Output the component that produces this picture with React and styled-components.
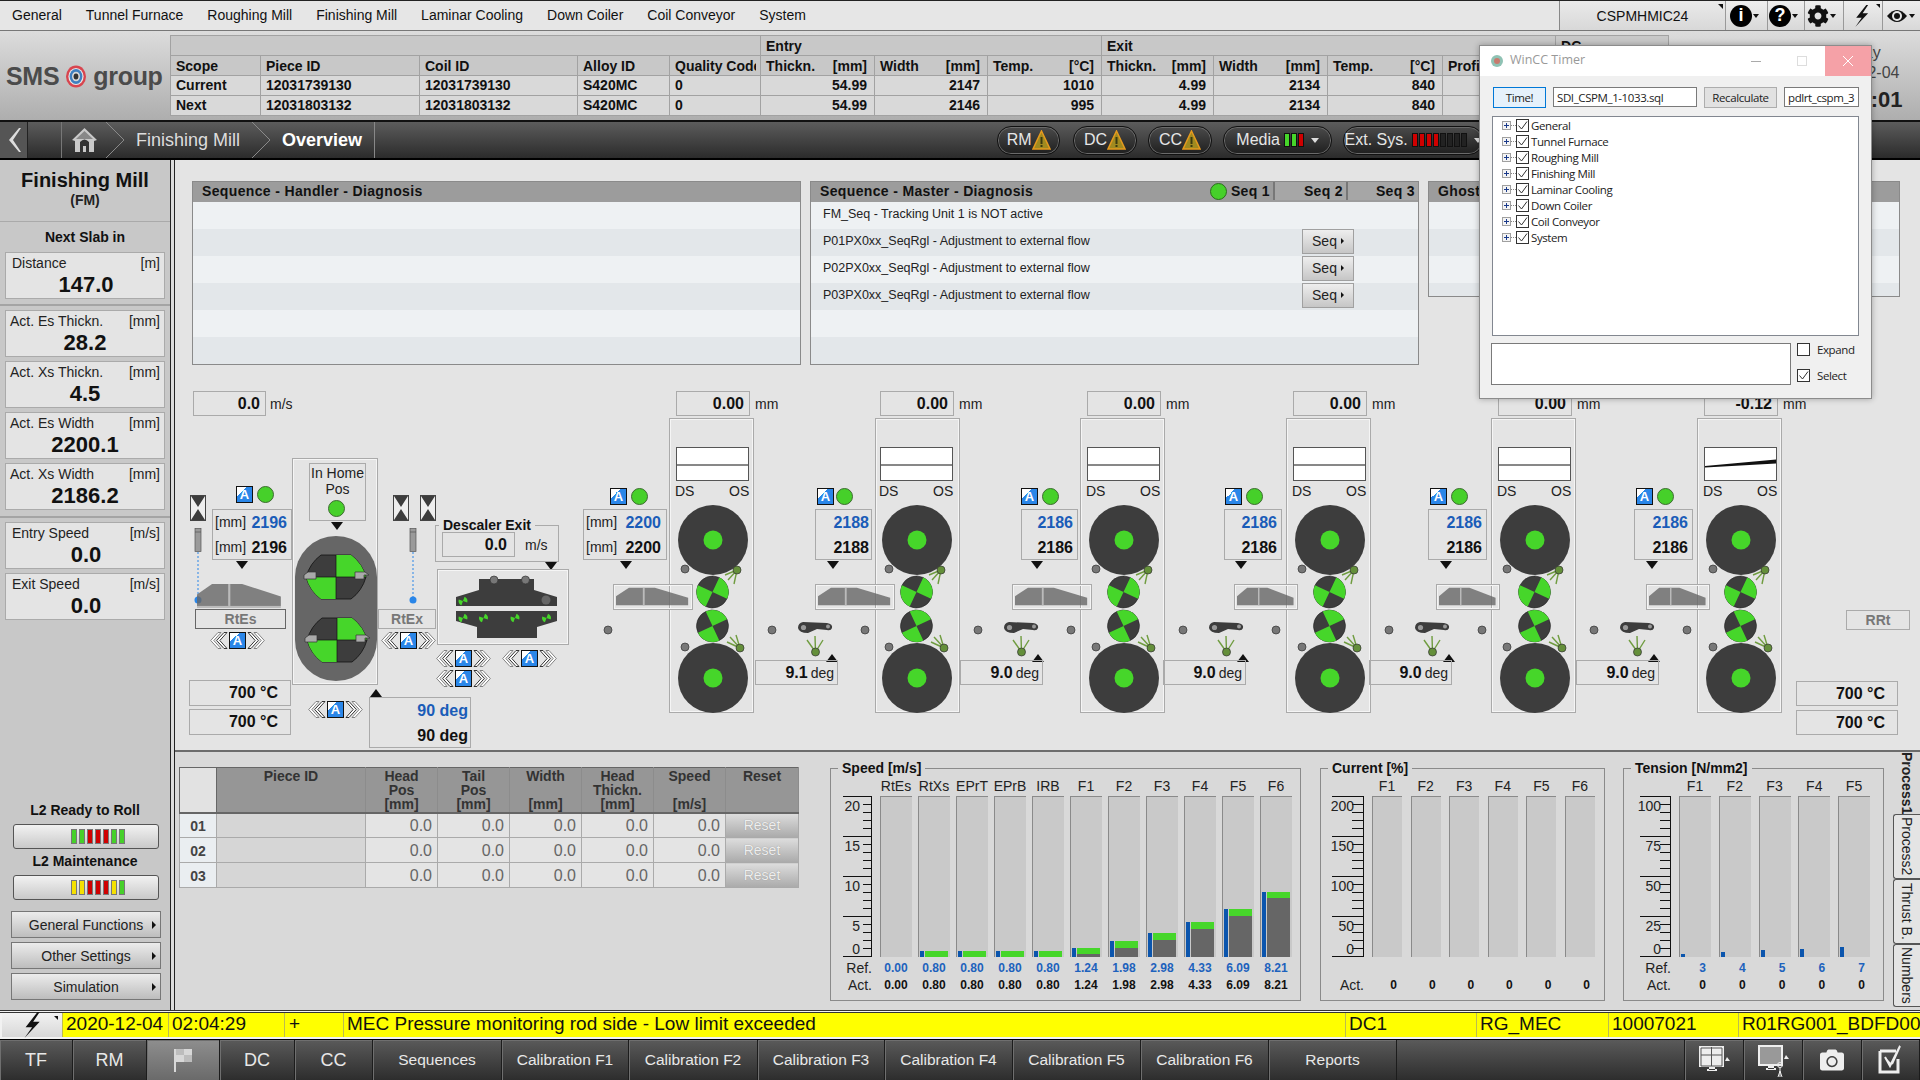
import React from 'react'
import styled, { createGlobalStyle, css } from 'styled-components'
import { FaCog, FaCamera } from 'react-icons/fa'

const GlobalStyle = createGlobalStyle`
  html, body { margin: 0; padding: 0; background: #e4e4e4; }
  * { box-sizing: border-box; }
  body { font-family: "Liberation Sans", Arial, sans-serif; color: #111; }
`

const Page = styled.div`
  position: relative;
  width: 1920px;
  height: 1080px;
  overflow: hidden;
  display: flex;
  flex-direction: column;
  font-size: 14px;
`

/* ---------- top menu ---------- */
const TopMenu = styled.div`
  height: 31px;
  display: flex;
  align-items: center;
  background: #e6e6e6;
  border-top: 1px solid #222;
  border-bottom: 1px solid #777;
`
const MenuItems = styled.div`
  flex: 1;
  display: flex;
  gap: 24px;
  padding: 0 0 2px 12px;
  font-size: 14px;
`
const HostBox = styled.div`
  position: relative;
  width: 166px;
  height: 29px;
  display: flex;
  align-items: center;
  justify-content: center;
  background: linear-gradient(#eaeaea, #d8d8d8);
  border-left: 1px solid #888;
  &::after {
    content: '';
    position: absolute;
    right: 2px;
    top: 3px;
    border-top: 5px solid #111;
    border-left: 5px solid transparent;
  }
`
const ToolBtn = styled.div`
  position: relative;
  width: ${p => p.$w}px;
  height: 29px;
  display: flex;
  align-items: center;
  gap: 1px;
  padding-left: ${p => p.$pl}px;
  border-left: 1px solid #999;
  background: linear-gradient(#eee, #d8d8d8);
`
const CornerMark = styled.span`
  position: absolute;
  right: 2px;
  top: 3px;
  border-top: 4px solid #111;
  border-left: 4px solid transparent;
`
const RoundIcon = styled.span`
  width: 22px;
  height: 22px;
  border-radius: 50%;
  background: #000;
  color: #fff;
  font-weight: bold;
  font-size: 18px;
  display: flex;
  align-items: center;
  justify-content: center;
`
const TinyArrow = styled.span`
  border-top: 4px solid #111;
  border-left: 3px solid transparent;
  border-right: 3px solid transparent;
`

/* ---------- header ---------- */
const Header = styled.div`
  height: 89px;
  display: flex;
  background: linear-gradient(#dcdcdc, #aeaeae);
`
const Logo = styled.div`
  width: 170px;
  display: flex;
  align-items: center;
  gap: 6px;
  padding: 2px 0 0 6px;
  font-size: 25px;
  font-weight: bold;
  color: #4b4b4b;
  letter-spacing: -0.3px;
`
const PlantTable = styled.table`
  margin-top: 4px;
  width: 1498px;
  height: 80px;
  table-layout: fixed;
  border-collapse: collapse;
  font-size: 14px;
  font-weight: bold;
  th, td {
    border: 1px solid #a2a2a2;
    padding: 0 7px 0 5px;
    text-align: left;
    white-space: nowrap;
    overflow: hidden;
    height: 20px;
    background: #d9d9d9;
  }
  td { padding-bottom: 1px; }
  th { background: #c8c8c8; }
`
const ClipText = styled.div`
  width: 81px;
  overflow: hidden;
`
const UnitHead = styled.div`
  display: flex;
  justify-content: space-between;
`
const NumCell = styled.td`
  && { text-align: right; }
`
const ClockBlock = styled.div`
  flex: 1;
  display: flex;
  flex-direction: column;
  align-items: center;
  padding: 12px 0 0 128px;
  font-size: 16px;
  line-height: 20px;
  color: #444;
`
const ClockTime = styled.div`
  font-size: 22px;
  font-weight: bold;
  line-height: 34px;
  color: #222;
`

/* ---------- breadcrumb ---------- */
const CrumbBar = styled.div`
  height: 40px;
  display: flex;
  align-items: center;
  background: linear-gradient(#5c5c5c, #2b2b2b);
  border-top: 2px solid #111;
  border-bottom: 2px solid #000;
  color: #e8e8e8;
`
const CrumbBack = styled.div`
  width: 28px;
  height: 100%;
  display: flex;
  align-items: center;
  justify-content: center;
  background: #555;
  border-right: 1px solid #222;
`
const CrumbSpacer = styled.div`
  width: 34px;
  height: 100%;
  border-right: 1px solid #777;
`
const CrumbHome = styled.div`
  width: 44px;
  display: flex;
  justify-content: center;
  padding-left: 1px;
`
const CrumbSep = styled.svg`
  width: 20px;
  height: 36px;
  flex: none;
`
const CrumbText = styled.div`
  font-size: 18px;
  font-weight: ${p => (p.$bold ? 'bold' : 'normal')};
  color: ${p => (p.$bold ? '#fff' : '#ddd')};
  padding: 0 ${p => p.$pad}px 0 10px;
`
const CrumbEnd = styled.div`
  width: 1px;
  height: 100%;
  background: #888;
  margin-right: 622px;
`
const Pill = styled.div`
  height: 29px;
  width: ${p => p.$w}px;
  margin-right: ${p => p.$mr}px;
  flex: none;
  display: flex;
  align-items: center;
  justify-content: center;
  gap: ${p => p.$gap ?? 4}px;
  border-radius: 14px;
  background: linear-gradient(#4a4a4a, #1f1f1f);
  border: 1px solid #111;
  box-shadow: 0 0 0 1px #6a6a6a inset;
  font-size: 16px;
  color: #e6e6e6;
`
const PillLeds = styled.div`
  display: flex;
  gap: 1px;
`
const PillLed = styled.span`
  width: 6px;
  height: 14px;
  background: ${p => p.$c};
  border: 1px solid #111;
`
const PillCaret = styled.span`
  margin-left: 3px;
  border-top: 5px solid #ddd;
  border-left: 4px solid transparent;
  border-right: 4px solid transparent;
`

/* ---------- main ---------- */
const Main = styled.div`
  height: 850px;
  display: flex;
`
const Sidebar = styled.aside`
  width: 170px;
  background: #c8c8c8;
  display: flex;
  flex-direction: column;
`
const SplitLine = styled.div`
  width: 5px;
  background: #dcdcdc;
  border-left: 1px solid #222;
  border-right: 1px solid #222;
`
const SideTitle = styled.div`
  height: 62px;
  padding-top: 9px;
  text-align: center;
  font-size: 20px;
  line-height: 22px;
  font-weight: bold;
  border-bottom: 1px solid #aaa;
  span { display: block; font-size: 14px; line-height: 18px; color: #222; }
`
const SideHeading = styled.div`
  text-align: center;
  font-weight: bold;
  font-size: 14px;
  line-height: 29px;
  padding-top: 1px;
`
const SideCard = styled.div`
  margin: 0 5px ${p => p.$mb ?? 4}px;
  height: 47px;
  background: #e4e4e4;
  border: 1px solid #aaa;
  padding: 1px 4px 0 ${p => p.$pl ?? 4}px;
`
const CardHead = styled.div`
  display: flex;
  justify-content: space-between;
  font-size: 14px;
  line-height: 18px;
  color: #222;
`
const CardValue = styled.div`
  text-align: center;
  font-size: 22px;
  font-weight: bold;
  line-height: 25px;
`
const SideRule = styled.div`
  height: 2px;
  margin: ${p => p.$mt}px 0 4px;
  background: #a4a4a4;
`
const SideFoot = styled.div`
  margin-top: auto;
  padding-bottom: 10px;
  display: flex;
  flex-direction: column;
`
const LedCaption = styled.div`
  text-align: center;
  font-weight: bold;
  font-size: 14px;
  line-height: 17px;
  margin-top: ${p => p.$mt}px;
  margin-bottom: 5px;
`
const LedButton = styled.div`
  margin: 0 11px 0 13px;
  height: 25px;
  display: flex;
  justify-content: flex-end;
  align-items: center;
  gap: 2px;
  padding-right: 33px;
  border: 1px solid #555;
  border-radius: 3px;
  background: linear-gradient(#f2f2f2, #c9c9c9);
`
const LedBar = styled.span`
  width: 6px;
  height: 15px;
  background: ${p => p.$c};
  border: 1px solid #777;
`
const SideMenuBtn = styled.div`
  position: relative;
  margin: ${p => p.$mt}px 9px 0 11px;
  height: 27px;
  display: flex;
  align-items: center;
  justify-content: center;
  border: 1px solid #777;
  background: linear-gradient(#ececec, #bdbdbd);
  color: #222;
  &::after {
    content: '';
    position: absolute;
    right: 4px;
    top: 9px;
    border-left: 4px solid #111;
    border-top: 4px solid transparent;
    border-bottom: 4px solid transparent;
  }
`

const Content = styled.div`
  width: 1745px;
  display: flex;
  flex-direction: column;
  background: #e4e4e4;
`

/* ---------- sequence panels ---------- */
const SeqArea = styled.div`
  height: 210px;
  padding: 21px 0 0 17px;
  display: flex;
  align-items: flex-start;
  gap: 9px;
`
const SeqPanel = styled.div`
  width: ${p => p.$w}px;
  height: ${p => p.$h}px;
  border: 1px solid #8a8a8a;
  overflow: hidden;
  background: #eef1f3;
`
const SeqTitle = styled.div`
  height: 20px;
  display: flex;
  align-items: center;
  padding: 0 0 2px 9px;
  background: #9c9c9c;
  font-size: 14px;
  font-weight: bold;
  letter-spacing: 0.35px;
`
const SeqName = styled.div`
  flex: 1;
`
const SeqTab = styled.div`
  width: ${p => p.$w}px;
  height: 100%;
  display: flex;
  align-items: center;
  justify-content: flex-end;
  padding-right: 3px;
  border-left: ${p => (p.$line ? '2px solid #777' : 'none')};
  background: ${p => (p.$line ? '#a6a6a6' : 'transparent')};
`
const SeqLed = styled.span`
  width: 17px;
  height: 17px;
  border-radius: 50%;
  background: #46d02a;
  border: 1px solid #2b6e1c;
  margin-right: 3px;
`
const SeqRow = styled.div`
  height: 27px;
  display: flex;
  align-items: center;
  justify-content: space-between;
  padding: 0 64px 3px 12px;
  background: ${p => (p.$alt ? '#e3e7ea' : '#eef1f3')};
  font-size: 12.5px;
  color: #222;
`
const SeqButton = styled.div`
  width: 52px;
  height: 25px;
  display: flex;
  align-items: center;
  justify-content: center;
  gap: 4px;
  font-size: 14px;
  background: linear-gradient(#eee, #c6c6c6);
  border: 1px solid #a0a0a0;
  &::after {
    content: '';
    border-left: 3px solid #111;
    border-top: 3px solid transparent;
    border-bottom: 3px solid transparent;
  }
`

/* ---------- diagram canvas ---------- */
const Canvas = styled.div`
  position: relative;
  height: 380px;
`
const at = css`
  position: absolute;
  left: ${p => p.$x - 175}px;
  top: ${p => p.$y - 370}px;
`
const ReadBox = styled.div`
  ${at}
  width: ${p => p.$w}px;
  height: ${p => p.$h ?? 25}px;
  border: 1px solid #aaa;
  display: flex;
  align-items: center;
  justify-content: flex-end;
  padding-right: ${p => p.$pr ?? 5}px;
  font-size: 16px;
  font-weight: bold;
`
const DoubleBox = styled.div`
  ${at}
  width: ${p => p.$w}px;
  height: 51px;
  border: 1px solid #aaa;
  padding-right: ${p => p.$pr ?? 4}px;
  display: flex;
  flex-direction: column;
  justify-content: center;
  font-size: 16px;
  font-weight: bold;
  line-height: 25px;
`
const DoubleRow = styled.div`
  display: flex;
  justify-content: space-between;
  padding-left: 2px;
  color: ${p => (p.$blue ? '#1a5cb8' : '#111')};
  i { font-style: normal; font-weight: normal; font-size: 14px; color: #222; }
  b { margin-left: auto; }
`
const Unit = styled.span`
  ${at}
  font-size: 14px;
  color: #222;
`
const Led = styled.span`
  ${at}
  width: 17px;
  height: 17px;
  border-radius: 50%;
  background: #46d02a;
  border: 1px solid #3d6b30;
`
const AutoIcon = styled.span`
  width: 17px;
  height: 17px;
  flex: none;
  display: flex;
  align-items: center;
  justify-content: center;
  border: 1px solid #111;
  background: linear-gradient(135deg, #fff 0 30%, #2a86e8 30%);
  color: #fff;
  font-size: 13px;
  font-weight: bold;
`
const AutoPlaced = styled(AutoIcon)`
  ${at}
`
const MoveRow = styled.div`
  ${at}
  display: flex;
  align-items: center;
  gap: 1px;
`
const TriDown = styled.span`
  ${at}
  border-top: 8px solid #111;
  border-left: 6px solid transparent;
  border-right: 6px solid transparent;
`
const TriUp = styled.span`
  ${at}
  border-bottom: 8px solid #111;
  border-left: 6px solid transparent;
  border-right: 6px solid transparent;
`
const DrawBox = styled.svg`
  ${at}
  overflow: visible;
`
const RollLabel = styled.div`
  ${at}
  width: ${p => p.$w}px;
  height: 20px;
  border: 1px solid ${p => p.$dark ? '#666' : '#aaa'};
  display: flex;
  align-items: center;
  justify-content: center;
  font-weight: bold;
  font-size: 14px;
  color: #777;
`
const FrameBox = styled.div`
  ${at}
  width: ${p => p.$w}px;
  height: ${p => p.$h}px;
  border: 1px solid #aaa;
  box-shadow: inset 0 0 0 1px #f5f5f5;
`
const HomeBox = styled.div`
  ${at}
  width: 57px;
  height: 58px;
  border: 1px solid #aaa;
  text-align: center;
  font-size: 14px;
  line-height: 16px;
  padding-top: 1px;
  color: #222;
`
const GroupBox = styled.div`
  ${at}
  width: 124px;
  height: 37px;
  border: 1px solid #aaa;
`
const GroupTitle = styled.span`
  ${at}
  padding: 0 4px;
  background: #e4e4e4;
  font-weight: bold;
  font-size: 14px;
`
const AngleBox = styled(ReadBox)`
  font-size: 16px;
  padding-right: 3px;
  gap: 3px;
  span { font-weight: normal; font-size: 14px; color: #222; }
`
const StandLabel = styled.span`
  ${at}
  font-size: 14px;
  color: #222;
`
const PieceFrame = styled.div`
  ${at}
  width: ${p => p.$w}px;
  height: 26px;
  border: 1px solid #aaa;
  box-shadow: inset 0 0 0 1px #f4f4f4;
  padding: 2px;
`

/* ---------- lower panel ---------- */
const Lower = styled.div`
  height: 260px;
  display: flex;
  align-items: flex-start;
  background: #d9d9d9;
  border-top: 2px solid #6c6c6c;
  padding-left: 4px;
`
const SlabTable = styled.table`
  width: 619px;
  margin-top: 15px;
  table-layout: fixed;
  border-collapse: collapse;
  border: 1px solid #666;
  th {
    height: 45px;
    background: #969696;
    color: #333;
    font-size: 14px;
    line-height: 14px;
    vertical-align: top;
    padding: 1px 0 0;
    border-right: 1px solid #8c8c8c;
    border-bottom: 2px solid #666;
  }
  th:first-child { background: #e2e2e2; border-right: 1px solid #666; }
  td {
    height: 25px;
    background: #e4e4e4;
    border: 1px solid #aaa;
    text-align: right;
    padding: 1px 5px 0 0;
    font-size: 16px;
    line-height: 18px;
    color: #666;
  }
`
const RowNo = styled.td`
  && { background: #eaeef1; text-align: center; padding: 1px 0 0; font-weight: bold; font-size: 14px; color: #444; }
`
const EmptyId = styled.td`
  && { background: #d6d6d6; }
`
const ResetCell = styled.td`
  && { padding: 0; background: #d0d0d0; }
`
const ResetBtn = styled.div`
  height: 23px;
  display: flex;
  align-items: center;
  justify-content: center;
  background: linear-gradient(#dcdcdc, #ababab);
  color: #eee;
  font-size: 14px;
  text-shadow: 0 0 1px #888;
`
const ChartField = styled.fieldset`
  margin: 8px 0 0 ${p => p.$ml}px;
  padding: 0;
  width: ${p => p.$w}px;
  height: 241px;
  border: 1px solid #8a8a8a;
  min-width: 0;
`
const ChartLegend = styled.legend`
  margin-left: 7px;
  padding: 0 4px;
  font-size: 14px;
  font-weight: bold;
  line-height: 16px;
`
const ColsLine = styled.div`
  display: flex;
  justify-content: space-between;
  margin-left: ${p => p.$left}px;
  width: ${p => p.$w}px;
`
const ColName = styled.div`
  width: ${p => p.$cw}px;
  height: 20px;
  text-align: center;
  white-space: nowrap;
  font-size: 14px;
  line-height: 20px;
  color: #222;
  display: flex;
  justify-content: center;
`
const PlotRow = styled.div`
  display: flex;
  height: 161px;
`
const AxisSvg = styled.svg`
  flex: none;
  overflow: visible;
`
const BarCol = styled.div`
  width: ${p => p.$cw}px;
  height: 161px;
  background: #c9c9c9;
  border-top: 1px solid #8a8a8a;
  border-left: 1px solid #8a8a8a;
  display: flex;
  align-items: flex-end;
  padding-left: 1px;
  gap: 1px;
`
const RefBar = styled.div`
  width: 4px;
  height: ${p => p.$h}px;
  background: #0b55ad;
`
const GreenBar = styled.div`
  width: 23px;
  height: ${p => p.$h}px;
  background: #46d62a;
  display: flex;
  align-items: flex-end;
`
const GrayFill = styled.div`
  width: 100%;
  height: ${p => p.$h}px;
  background: #666;
`
const NumRow = styled.div`
  display: flex;
  height: ${p => p.$h}px;
  align-items: center;
  padding-top: ${p => p.$pt ?? 0}px;
`
const NumLabel = styled.div`
  flex: none;
  width: ${p => p.$w}px;
  text-align: right;
  padding-right: 8px;
  font-size: 14px;
  color: #222;
`
const NumVal = styled.div`
  width: ${p => p.$cw}px;
  text-align: ${p => p.$align};
  padding-right: ${p => (p.$align === 'right' ? 5 : 0)}px;
  font-size: 12px;
  font-weight: bold;
  color: ${p => (p.$blue ? '#1d62bd' : '#111')};
`
const NumVals = styled.div`
  display: flex;
  justify-content: space-between;
  width: ${p => p.$w}px;
`
const SideTabs = styled.div`
  margin-left: 9px;
  width: 27px;
  display: flex;
  flex-direction: column;
`
const SideTab = styled.div`
  width: 27px;
  height: ${p => p.$h}px;
  writing-mode: vertical-rl;
  display: flex;
  align-items: center;
  justify-content: center;
  font-size: 14px;
  font-weight: ${p => (p.$on ? 'bold' : 'normal')};
  color: #222;
  border: ${p => (p.$on ? 'none' : '1px solid #555')};
  border-right: none;
  border-radius: 3px 0 0 3px;
  background: ${p => (p.$on ? 'transparent' : '#e4e4e4')};
`

/* ---------- alarm + nav ---------- */
const AlarmBar = styled.div`
  height: 30px;
  display: flex;
  background: #f2f2f2;
  border-top: 3px double #333;
  border-bottom: 1px solid #000;
  padding: 0 0 2px 2px;
`
const AlarmBolt = styled.div`
  position: relative;
  width: 60px;
  display: flex;
  align-items: center;
  justify-content: center;
  background: linear-gradient(#f2f2f2, #d8d8d8);
  &::after {
    content: '';
    position: absolute;
    right: 4px;
    top: 3px;
    border-top: 4px solid #111;
    border-left: 4px solid transparent;
  }
`
const AlarmCell = styled.div`
  width: ${p => p.$w}px;
  flex: none;
  background: #ffff00;
  border-left: 1px solid #bcbc50;
  padding-left: ${p => p.$pl ?? 3}px;
  font-size: 19px;
  line-height: 22px;
  white-space: nowrap;
  overflow: hidden;
`
const BottomNav = styled.div`
  height: 40px;
  display: flex;
  background: linear-gradient(#5a5a5a, #2d2d2d);
`
const NavBtn = styled.div`
  width: ${p => p.$w}px;
  flex: none;
  display: flex;
  align-items: center;
  justify-content: center;
  font-size: ${p => p.$fs ?? 15.5}px;
  color: #e8e8e8;
  border-right: 1px solid #1c1c1c;
  background: ${p => (p.$on ? 'linear-gradient(#8e8e8e, #6a6a6a)' : 'transparent')};
  box-shadow: inset 1px 1px 0 #6f6f6f;
`
const NavFill = styled.div`
  flex: 1;
  border-right: 1px solid #1c1c1c;
`

/* ---------- floating window ---------- */
const Win = styled.div`
  position: absolute;
  left: 1479px;
  top: 45px;
  width: 393px;
  height: 354px;
  background: #f0f0f0;
  border: 1px solid #8c8c8c;
  box-shadow: 0 0 6px rgba(0,0,0,.3);
  font-family: "Open Sans", sans-serif;
  font-size: 11.5px;
  letter-spacing: -0.4px;
  z-index: 10;
`
const WinTitle = styled.div`
  height: 30px;
  display: flex;
  align-items: center;
  background: #fff;
  padding-left: 10px;
  color: #999;
  font-size: 12.5px;
  letter-spacing: 0;
`
const WinName = styled.div`
  flex: 1;
  padding: 0 0 3px 6px;
`
const WinCtl = styled.div`
  width: 46px;
  height: 100%;
  display: flex;
  align-items: center;
  justify-content: center;
  background: ${p => (p.$close ? '#f5a1a7' : 'transparent')};
  color: #fff;
`
const WinMinGlyph = styled.span`
  width: 10px;
  height: 1px;
  background: #aaa;
`
const WinMaxGlyph = styled.span`
  width: 10px;
  height: 10px;
  border: 1px solid #ddd;
`
const WinRow = styled.div`
  display: flex;
  align-items: flex-start;
  gap: 7px;
  padding: 11px 12px 0 13px;
`
const WinButton = styled.div`
  width: ${p => p.$w}px;
  height: 21px;
  display: flex;
  align-items: center;
  justify-content: center;
  border: 1px solid ${p => (p.$on ? '#0078d7' : '#adadad')};
  background: ${p => (p.$on ? '#e5f1fb' : '#e1e1e1')};
  color: #222;
`
const WinInput = styled.div`
  width: ${p => p.$w}px;
  height: 20px;
  padding-left: 3px;
  display: flex;
  align-items: center;
  background: #fff;
  border: 1px solid #7a7a7a;
  color: #222;
`
const Tree = styled.div`
  margin: 8px 12px 0;
  height: 220px;
  background: #fff;
  border: 1px solid #828790;
  padding: 0 0 0 9px;
`
const TreeRow = styled.div`
  height: 16px;
  display: flex;
  align-items: center;
  color: #222;
`
const TreeExp = styled.span`
  position: relative;
  width: 9px;
  height: 9px;
  flex: none;
  border: 1px solid #a0a0a0;
  background: #f4f4f4;
  &::before {
    content: '';
    position: absolute;
    left: 1px;
    top: 3px;
    width: 5px;
    height: 1px;
    background: #1a3a8a;
  }
  &::after {
    content: '';
    position: absolute;
    left: 3px;
    top: 1px;
    width: 1px;
    height: 5px;
    background: #1a3a8a;
  }
`
const TreeDots = styled.span`
  width: 5px;
  border-top: 1px dotted #888;
  flex: none;
`
const CheckBox = styled.span`
  width: 13px;
  height: 13px;
  flex: none;
  margin-right: 2px;
  border: 1px solid #333;
  background: #fff;
  display: flex;
  align-items: center;
  justify-content: center;
`
const WinFoot = styled.div`
  display: flex;
  gap: 6px;
  margin: 7px 0 0 11px;
`
const WinMemo = styled.div`
  width: 300px;
  height: 42px;
  background: #fff;
  border: 1px solid #7a7a7a;
`
const WinChecks = styled.div`
  display: flex;
  flex-direction: column;
  gap: 13px;
`
const WinCheckRow = styled.div`
  display: flex;
  align-items: center;
  height: 13px;
  gap: 5px;
  color: #222;
`

/* ---------- drawings ---------- */
const LogoMark = () => (
  <svg width="22" height="23" viewBox="0 0 22 23">
    <ellipse cx="11" cy="11.5" rx="10" ry="11" fill="#d8454f" />
    <ellipse cx="11" cy="11.5" rx="7.6" ry="8.6" fill="#e9e9e9" />
    <ellipse cx="11" cy="11.5" rx="6.4" ry="7.4" fill="#3f7fc0" />
    <ellipse cx="11" cy="11.5" rx="4" ry="4.8" fill="#d8d8d8" />
    <ellipse cx="11" cy="11.5" rx="2.4" ry="3" fill="#333" />
  </svg>
)
const HomeIcon = () => (
  <svg width="25" height="25" viewBox="0 0 25 25">
    <path d="M12.5 0 L25 12 L22 13 L22 24 L3 24 L3 13 L0 12 Z" fill="#c9c9c9" />
    <path d="M12.5 3 L4 11 L21 11Z" fill="#888" />
    <path d="M8 24 V14 Q12.5 9 17 14 V24 H14 V18 H11 V24Z" fill="#333" />
  </svg>
)
const BoltIcon = ({ size = 24, color = '#111' }) => (
  <svg width={size * 0.7} height={size} viewBox="0 0 16 24">
    <path d="M13 0 L2 14 H8 L1 24 L15 9 H9 L15 0Z" fill={color} />
  </svg>
)
const EyeIcon = () => (
  <svg width="22" height="16" viewBox="0 0 22 16">
    <path d="M1 8 Q11 -4 21 8 Q11 20 1 8Z" fill="#111" />
    <circle cx="11" cy="8" r="5" fill="#e6e6e6" />
    <circle cx="11" cy="8" r="3" fill="#111" />
  </svg>
)
const WarnTri = () => (
  <svg width="19" height="20" viewBox="0 0 19 20">
    <path d="M9.5 1 L18 19 H1Z" fill="#a08a20" stroke="#e59a1e" strokeWidth="1.5" />
    <rect x="8.5" y="7" width="2" height="7" fill="#3a3a10" />
    <rect x="8.5" y="15" width="2" height="2" fill="#3a3a10" />
  </svg>
)
const Hourglass = ({ x, y }) => (
  <DrawBox $x={x} $y={y} width="16" height="26" viewBox="0 0 16 26">
    <rect x=".5" y=".5" width="15" height="25" fill="#eee" stroke="#444" />
    <path d="M1 1 H15 L8 12Z M1 25 H15 L8 14Z" fill="#3c3c3c" />
  </DrawBox>
)
const Sensor = ({ x }) => (
  <DrawBox $x={x} $y={528} width="9" height="77" viewBox="0 0 9 77">
    <rect x="1" y=".5" width="6" height="23" fill="#9a9a9a" stroke="#555" strokeWidth=".7" />
    <line x1="1" x2="7" y1="4" y2="4" stroke="#555" strokeWidth=".7" />
    <line x1="4" x2="4" y1="24" y2="70" stroke="#2a86e8" strokeDasharray="2 2" />
    <circle cx="4" cy="72" r="3.5" fill="#2a86e8" />
  </DrawBox>
)
const Chev = ({ right }) => (
  <svg width="18" height="17" viewBox="0 0 18 17">
    <g transform={right ? 'translate(18 0) scale(-1 1)' : undefined} fill="#fff" strokeWidth=".9">
      <path d="M8 .5 L.7 8.5 L8 16.5 H11 L3.8 8.5 L11 .5Z" stroke="#777" />
      <path d="M14 .5 L6.7 8.5 L14 16.5 H17 L9.8 8.5 L17 .5Z" stroke="#222" />
    </g>
  </svg>
)
const MoveCtl = ({ x, y }) => (
  <MoveRow $x={x} $y={y}>
    <Chev />
    <AutoIcon>A</AutoIcon>
    <Chev right />
  </MoveRow>
)
const PieceShape = ({ x, y, w, h }) => (
  <DrawBox $x={x} $y={y} width={w} height={h} viewBox="0 0 80 24" preserveAspectRatio="none">
    <path d="M0 11 L14 1 H42 L78 13 V22 H0Z" fill="#666" fillOpacity=".8" />
    <rect x="29" y="1" width="2" height="21" fill="#bbb" />
    <rect x="0" y="22" width="78" height="2" fill="#bbb" />
  </DrawBox>
)
const Pinwheel = ({ cx, cy, r, rot = 0, border = '#222' }) => (
  <g transform={`translate(${cx} ${cy}) rotate(${rot})`}>
    <circle r={r} fill="#3d3d3d" stroke={border} strokeWidth=".5" />
    <path d={`M0 0 V${-r} A${r} ${r} 0 0 1 ${r} 0Z M0 0 V${r} A${r} ${r} 0 0 1 ${-r} 0Z`} fill="#46d62a" />
  </g>
)
const Spray = ({ cx, cy, ends }) => (
  <g>
    {ends.map(([ex, ey], k) => (
      <line key={k} x1={cx} y1={cy} x2={ex} y2={ey} stroke="#6f9c3f" strokeWidth="1.4" />
    ))}
    <circle cx={cx} cy={cy} r="4" fill="#648f3a" stroke="#333" strokeWidth=".7" />
  </g>
)
const GrayDot = ({ cx, cy }) => <circle cx={cx} cy={cy} r="4" fill="#777" stroke="#333" strokeWidth=".7" />

const CoilerShape = () => {
  const roll = 'M-15 -22 H15 Q26 -14 30 0 Q26 14 15 22 H-15 Q-26 14 -30 0 Q-26 -14 -15 -22Z'
  const single = (cx, cy) => (
    <g transform={`translate(${cx} ${cy})`}>
      <path d={roll} fill="#3d3d3d" stroke="#111" strokeWidth=".8" />
      <path d="M0 0 V-22 H15 Q26 -14 30 0Z M0 0 V22 H-15 Q-26 14 -30 0Z" fill="#46d62a" />
      <line x1="0" x2="0" y1="-22" y2="22" stroke="#111" strokeWidth=".7" />
      <line x1="-30" x2="30" y1="0" y2="0" stroke="#111" strokeWidth=".7" />
      <path d="M-32 -2 L-28 -5 H-20 V2 H-32Z M19 -5 H29 L33 -2 H28 V2 H19Z" fill="#aaa" stroke="#333" strokeWidth=".7" />
    </g>
  )
  return (
    <DrawBox $x={295} $y={536} width="82" height="145" viewBox="0 0 82 145">
      <rect width="82" height="145" rx="41" fill="#666" />
      {single(41, 41)}
      {single(42, 104)}
    </DrawBox>
  )
}

const DescalerShape = () => (
  <DrawBox $x={437} $y={569} width="132" height="76" viewBox="0 0 132 76">
    <path d="M42 10 H97 V21 L120 28 V37 H19 V28 L42 21Z" fill="#3d3d3d" />
    <path d="M19 42 H120 V52 L100 58 V69 H40 V58 L19 52Z" fill="#3d3d3d" />
    <GrayDot cx="57" cy="11" />
    <GrayDot cx="88.5" cy="11" />
    <circle cx="109" cy="31" r="4.5" fill="#666" />
    {[[26, 32], [26, 49], [46.5, 49], [78, 49], [109.5, 49]].map(([cx, cy], k) => (
      <Pinwheel key={k} cx={cx} cy={cy} r="4.5" rot="20" border="#3d3d3d" />
    ))}
  </DrawBox>
)

const StandDrawing = ({ x }) => (
  <DrawBox $x={x} $y={418} width="85" height="295" viewBox="0 0 85 295">
    <circle cx="44" cy="122" r="35" fill="#3d3d3d" />
    <circle cx="44" cy="122" r="9.5" fill="#46d62a" />
    <circle cx="44" cy="260" r="35" fill="#3d3d3d" />
    <circle cx="44" cy="260" r="9.5" fill="#46d62a" />
    <Pinwheel cx="43.5" cy="174" r="16" rot="25" />
    <Pinwheel cx="43.5" cy="208" r="16" rot="-25" />
    <GrayDot cx="16" cy="151" />
    <GrayDot cx="16" cy="229" />
    <Spray cx="68" cy="152" ends={[[56, 157], [59, 162], [65, 166]]} />
    <Spray cx="71" cy="230" ends={[[58, 224], [61, 219], [67, 217]]} />
  </DrawBox>
)
const Gauge = ({ x, tilt }) => (
  <DrawBox $x={x} $y={447} width="73" height="34" viewBox="0 0 73 34">
    <rect x=".5" y=".5" width="72" height="33" fill="#fff" stroke="#555" />
    {tilt
      ? <path d="M1 19 L72 12.5 V16.5 L1 20.5Z" fill="#111" />
      : <line x1="1" x2="72" y1="18" y2="18" stroke="#111" />}
  </DrawBox>
)
const Looper = ({ x }) => (
  <DrawBox $x={x} $y={620} width="40" height="38" viewBox="0 0 40 38">
    <path d="M6 2 L30 3 Q36 4 35 8 Q34 11 30 10 L20 9 L11 13 Q2 13 1 8 Q1 3 6 2Z" fill="#3d3d3d" />
    <circle cx="6.5" cy="7.5" r="2.6" fill="#999" />
    <circle cx="31" cy="6.5" r="2" fill="#999" />
    <Spray cx="18.5" cy="32" ends={[[10, 20], [18, 16], [26, 20]]} />
  </DrawBox>
)
const MillDots = ({ x }) => (
  <DrawBox $x={x} $y={620} width="8" height="20" viewBox="0 0 8 20">
    <GrayDot cx="4" cy="10" />
  </DrawBox>
)

/* ---------- data ---------- */
const menus = ['General', 'Tunnel Furnace', 'Roughing Mill', 'Finishing Mill', 'Laminar Cooling', 'Down Coiler', 'Coil Conveyor', 'System']
const colWidths = [90, 159, 158, 92, 91, 114, 113, 114, 112, 114, 115, 113, 113]
const stands = [
  { x: 669, d: 0, ax: 0, pr: 5, top: '0.00', w: 2200, bL: 583, bR: 667, pX: 613, pW: 80, ang: '9.1', aX: 755 },
  { x: 875, d: -2, ax: 2, pr: 2, top: '0.00', w: 2188, bL: 815, bR: 872, pX: 815, pW: 80, ang: '9.0', aX: 960 },
  { x: 1080, d: 0, ax: 0, pr: 4, top: '0.00', w: 2186, bL: 1021, bR: 1078, pX: 1012, pW: 80, ang: '9.0', aX: 1163 },
  { x: 1286, d: 0, ax: 0, pr: 4, top: '0.00', w: 2186, bL: 1224, bR: 1282, pX: 1234, pW: 64, ang: '9.0', aX: 1369 },
  { x: 1491, d: 0, ax: 0, pr: 4, top: '0.00', w: 2186, bL: 1428, bR: 1487, pX: 1436, pW: 64, ang: '9.0', aX: 1576 },
  { x: 1697, d: 0, ax: 0, pr: 4, top: '-0.12', w: 2186, bL: 1634, bR: 1693, pX: 1646, pW: 64, tilt: true },
]
const speedCols = [
  { n: 'RtEs', r: '0.00', a: '0.00', b: 0, g: 0, d: 0 },
  { n: 'RtXs', r: '0.80', a: '0.80', b: 6, g: 6, d: 0 },
  { n: 'EPrT', r: '0.80', a: '0.80', b: 6, g: 6, d: 0 },
  { n: 'EPrB', r: '0.80', a: '0.80', b: 6, g: 6, d: 0 },
  { n: 'IRB', r: '0.80', a: '0.80', b: 6, g: 6, d: 0 },
  { n: 'F1', r: '1.24', a: '1.24', b: 9, g: 9, d: 3 },
  { n: 'F2', r: '1.98', a: '1.98', b: 16, g: 16, d: 9 },
  { n: 'F3', r: '2.98', a: '2.98', b: 24, g: 24, d: 17 },
  { n: 'F4', r: '4.33', a: '4.33', b: 35, g: 35, d: 28 },
  { n: 'F5', r: '6.09', a: '6.09', b: 48, g: 48, d: 41 },
  { n: 'F6', r: '8.21', a: '8.21', b: 65, g: 65, d: 59 },
]
const currentCols = ['F1', 'F2', 'F3', 'F4', 'F5', 'F6'].map(n => ({ n, a: '0', b: 0, g: 0, d: 0 }))
const tensionCols = [3, 4, 5, 6, 7].map((r, k) => ({ n: `F${k + 1}`, r: String(r), a: '0', b: [3, 5, 7, 8, 10][k], g: 0, d: 0 }))

const Axis = ({ width, labels, major, minor, labelX }) => {
  const ticks = []
  for (let k = 0; k <= 20; k++) ticks.push(k)
  return (
    <AxisSvg width={width} height="161" viewBox={`0 0 ${width} 161`}>
      {ticks.map(k => {
        const y = k * 8 + 0.5
        return <line key={k} x1={k % 5 === 0 ? major : minor} x2={width - 8} y1={y} y2={y} stroke="#111" />
      })}
      <line x1={width - 8.5} x2={width - 8.5} y1="0" y2="161" stroke="#111" />
      {labels.map((l, k) => (
        <text key={l} x={labelX} y={k === labels.length - 1 ? 158 : 15 + k * 40} textAnchor="end" fontSize="14" fill="#222" fontFamily="Liberation Sans">{l}</text>
      ))}
    </AxisSvg>
  )
}

const Chart = ({ title, ml, w, offset, span, cw, cols, labels, major, minor, labelX, align, rowPad }) => (
  <ChartField $ml={ml} $w={w}>
    <ChartLegend>{title}</ChartLegend>
    <ColsLine $left={offset} $w={span}>
      {cols.map(c => <ColName key={c.n} $cw={cw}>{c.n}</ColName>)}
    </ColsLine>
    <PlotRow>
      <Axis width={offset} labels={labels} major={major} minor={minor} labelX={labelX} />
      <ColsLine $left={0} $w={span}>
        {cols.map(c => (
          <BarCol key={c.n} $cw={cw}>
            {c.b > 0 && <RefBar $h={c.b} />}
            {c.g > 0 && <GreenBar $h={c.g}><GrayFill $h={c.d} /></GreenBar>}
          </BarCol>
        ))}
      </ColsLine>
    </PlotRow>
    <NumRow $h={rowPad} $pt={2}>
      {cols[0].r && <NumLabel $w={offset}>Ref.</NumLabel>}
      {cols[0].r && (
        <NumVals $w={span}>
          {cols.map(c => <NumVal key={c.n} $cw={cw} $align={align} $blue>{c.r}</NumVal>)}
        </NumVals>
      )}
    </NumRow>
    <NumRow $h={15}>
      <NumLabel $w={offset}>Act.</NumLabel>
      <NumVals $w={span}>
        {cols.map(c => <NumVal key={c.n} $cw={cw} $align={align}>{c.a}</NumVal>)}
      </NumVals>
    </NumRow>
  </ChartField>
)

const Stand = ({ s }) => (
  <>
    <ReadBox $x={s.x + 7 + s.d} $y={391} $w={74}>{s.top}</ReadBox>
    <Unit $x={s.x + 86 + s.d} $y={396}>mm</Unit>
    <FrameBox $x={s.x} $y={418} $w={85} $h={295} />
    <Gauge x={s.x + 7 + s.d} tilt={s.tilt} />
    <StandLabel $x={s.x + 6 + s.d} $y={483}>DS</StandLabel>
    <StandLabel $x={s.x + 60 + s.d} $y={483}>OS</StandLabel>
    <StandDrawing x={s.x + s.d} />
    <AutoPlaced $x={s.bR - 57 + s.ax} $y={488}>A</AutoPlaced>
    <Led $x={s.bR - 36} $y={488} />
    <DoubleBox $x={s.bL} $y={509} $w={s.bR - s.bL} $pr={s.pr}>
      <DoubleRow $blue>{s.x === 669 && <i>[mm]</i>}<b>{s.w}</b></DoubleRow>
      <DoubleRow>{s.x === 669 && <i>[mm]</i>}<b>{s.w}</b></DoubleRow>
    </DoubleBox>
    <TriDown $x={s.bR - 47 + s.ax} $y={561} />
    <PieceFrame $x={s.pX} $y={584} $w={s.pW}>
      <svg width={s.pW - 6} height="20" viewBox="0 0 80 24" preserveAspectRatio="none">
        <path d="M0 11 L14 1 H42 L78 13 V22 H0Z" fill="#666" fillOpacity=".8" />
        <rect x="29" y="1" width="2" height="21" fill="#bbb" />
      </svg>
    </PieceFrame>
    {s.ang && (
      <>
        <MillDots x={s.x + 99} />
        <MillDots x={s.x + 192} />
        <Looper x={s.x + 128} />
        <TriUp $x={s.x + 157} $y={654} />
        <AngleBox $x={s.aX} $y={660} $w={83}>{s.ang}<span>deg</span></AngleBox>
      </>
    )}
  </>
)

const Check = () => (
  <svg width="11" height="11" viewBox="0 0 11 11">
    <path d="M1.5 5.5 L4.5 9 L10 1.5" fill="none" stroke="#333" strokeWidth="1" />
  </svg>
)

const App = () => (
  <Page>
    <GlobalStyle />
    <TopMenu>
      <MenuItems>{menus.map(m => <span key={m}>{m}</span>)}</MenuItems>
      <HostBox>CSPMHMIC24</HostBox>
      <ToolBtn $w={42} $pl={4}><RoundIcon>i</RoundIcon><TinyArrow /></ToolBtn>
      <ToolBtn $w={37} $pl={1}><RoundIcon>?</RoundIcon><TinyArrow /></ToolBtn>
      <ToolBtn $w={39} $pl={2}><FaCog size={22} color="#111" /><TinyArrow /></ToolBtn>
      <ToolBtn $w={39} $pl={10}><BoltIcon size={22} /><CornerMark /></ToolBtn>
      <ToolBtn $w={38} $pl={3}><EyeIcon /><TinyArrow /></ToolBtn>
    </TopMenu>

    <Header>
      <Logo>SMS<LogoMark />group</Logo>
      <PlantTable>
        <colgroup>{colWidths.map((w, k) => <col key={k} width={w} />)}</colgroup>
        <thead>
          <tr>
            <th colSpan={5} />
            <th colSpan={3}>Entry</th>
            <th colSpan={4}>Exit</th>
            <th>DC</th>
          </tr>
          <tr>
            <th>Scope</th>
            <th>Piece ID</th>
            <th>Coil ID</th>
            <th>Alloy ID</th>
            <th><ClipText>Quality Code</ClipText></th>
            <th><UnitHead>Thickn.<span>[mm]</span></UnitHead></th>
            <th><UnitHead>Width<span>[mm]</span></UnitHead></th>
            <th><UnitHead>Temp.<span>[°C]</span></UnitHead></th>
            <th><UnitHead>Thickn.<span>[mm]</span></UnitHead></th>
            <th><UnitHead>Width<span>[mm]</span></UnitHead></th>
            <th><UnitHead>Temp.<span>[°C]</span></UnitHead></th>
            <th>Profile</th>
            <th />
          </tr>
        </thead>
        <tbody>
          <tr>
            <td>Current</td><td>12031739130</td><td>12031739130</td><td>S420MC</td><td>0</td>
            <NumCell>54.99</NumCell><NumCell>2147</NumCell><NumCell>1010</NumCell>
            <NumCell>4.99</NumCell><NumCell>2134</NumCell><NumCell>840</NumCell><td /><td />
          </tr>
          <tr>
            <td>Next</td><td>12031803132</td><td>12031803132</td><td>S420MC</td><td>0</td>
            <NumCell>54.99</NumCell><NumCell>2146</NumCell><NumCell>995</NumCell>
            <NumCell>4.99</NumCell><NumCell>2134</NumCell><NumCell>840</NumCell><td /><td />
          </tr>
        </tbody>
      </PlantTable>
      <ClockBlock>
        <div>Friday</div>
        <div>2020-12-04</div>
        <ClockTime>02:04:01</ClockTime>
      </ClockBlock>
    </Header>

    <CrumbBar>
      <CrumbBack>
        <svg width="16" height="26" viewBox="0 0 16 26"><path d="M13 1 L3 13 L13 25 L15 25 L7 13 L15 1Z" fill="#ddd" /></svg>
      </CrumbBack>
      <CrumbSpacer />
      <CrumbHome><HomeIcon /></CrumbHome>
      <CrumbSep viewBox="0 0 20 36"><path d="M0 0 L18 18 L0 36" fill="none" stroke="#8a8a8a" /></CrumbSep>
      <CrumbText $pad={12}>Finishing Mill</CrumbText>
      <CrumbSep viewBox="0 0 20 36"><path d="M0 0 L18 18 L0 36" fill="none" stroke="#8a8a8a" /></CrumbSep>
      <CrumbText $bold $pad={12}>Overview</CrumbText>
      <CrumbEnd />
      <Pill $w={63} $mr={13} $gap={0}>RM<WarnTri /></Pill>
      <Pill $w={64} $mr={11} $gap={0}>DC<WarnTri /></Pill>
      <Pill $w={64} $mr={11} $gap={0}>CC<WarnTri /></Pill>
      <Pill $w={109} $mr={11}>Media<PillLeds>{['#46d62a', '#46d62a', '#d00000'].map((c, k) => <PillLed key={k} $c={c} />)}</PillLeds><PillCaret /></Pill>
      <Pill $w={140} $mr={266}>Ext. Sys.<PillLeds>{['#d00000', '#d00000', '#d00000', '#d00000', '#222', '#222', '#222', '#222'].map((c, k) => <PillLed key={k} $c={c} />)}</PillLeds><PillCaret /></Pill>
      <Pill $w={70} $mr={0}><PillLeds><PillLed $c="#d00000" /><PillLed $c="#d00000" /></PillLeds><PillCaret /></Pill>
    </CrumbBar>

    <Main>
      <Sidebar>
        <SideTitle>Finishing Mill<span>(FM)</span></SideTitle>
        <SideHeading>Next Slab in</SideHeading>
        <SideCard $mb={0} $pl={6}><CardHead>Distance<span>[m]</span></CardHead><CardValue>147.0</CardValue></SideCard>
        <SideRule $mt={5} />
        <SideCard><CardHead>Act. Es Thickn.<span>[mm]</span></CardHead><CardValue>28.2</CardValue></SideCard>
        <SideCard><CardHead>Act. Xs Thickn.<span>[mm]</span></CardHead><CardValue>4.5</CardValue></SideCard>
        <SideCard><CardHead>Act. Es Width<span>[mm]</span></CardHead><CardValue>2200.1</CardValue></SideCard>
        <SideCard $mb={0}><CardHead>Act. Xs Width<span>[mm]</span></CardHead><CardValue>2186.2</CardValue></SideCard>
        <SideRule $mt={6} />
        <SideCard $pl={6}><CardHead>Entry Speed<span>[m/s]</span></CardHead><CardValue>0.0</CardValue></SideCard>
        <SideCard $pl={6}><CardHead>Exit Speed<span>[m/s]</span></CardHead><CardValue>0.0</CardValue></SideCard>
        <SideFoot>
          <LedCaption $mt={0}>L2 Ready to Roll</LedCaption>
          <LedButton>{['#46d02a', '#46d02a', '#d00000', '#d00000', '#d00000', '#46d02a', '#46d02a'].map((c, k) => <LedBar key={k} $c={c} />)}</LedButton>
          <LedCaption $mt={4}>L2 Maintenance</LedCaption>
          <LedButton>{['#f5e000', '#f5e000', '#d00000', '#d00000', '#d00000', '#f5e000', '#46d02a'].map((c, k) => <LedBar key={k} $c={c} />)}</LedButton>
          <SideMenuBtn $mt={11}>General Functions</SideMenuBtn>
          <SideMenuBtn $mt={4}>Other Settings</SideMenuBtn>
          <SideMenuBtn $mt={4}>Simulation</SideMenuBtn>
        </SideFoot>
      </Sidebar>
      <SplitLine />
      <Content>
        <SeqArea>
          <SeqPanel $w={609} $h={184}>
            <SeqTitle><SeqName>Sequence - Handler - Diagnosis</SeqName></SeqTitle>
            {[0, 1, 2, 3, 4, 5].map(k => <SeqRow key={k} $alt={k % 2 === 1} />)}
          </SeqPanel>
          <SeqPanel $w={609} $h={184}>
            <SeqTitle>
              <SeqName>Sequence - Master - Diagnosis</SeqName>
              <SeqLed />
              <SeqTab $w={43}>Seq 1</SeqTab>
              <SeqTab $w={73} $line>Seq 2</SeqTab>
              <SeqTab $w={72} $line>Seq 3</SeqTab>
            </SeqTitle>
            <SeqRow>FM_Seq - Tracking Unit 1 is NOT active</SeqRow>
            {['P01PX0xx_SeqRgl', 'P02PX0xx_SeqRgl', 'P03PX0xx_SeqRgl'].map((n, k) => (
              <SeqRow key={n} $alt={k % 2 === 0}>
                <span>{n} - Adjustment to external flow</span>
                <SeqButton>Seq</SeqButton>
              </SeqRow>
            ))}
            <SeqRow />
            <SeqRow $alt />
          </SeqPanel>
          <SeqPanel $w={472} $h={116}>
            <SeqTitle><SeqName>Ghost</SeqName></SeqTitle>
            {[0, 1, 2, 3].map(k => <SeqRow key={k} $alt={k % 2 === 1} />)}
          </SeqPanel>
        </SeqArea>

        <Canvas>
          <ReadBox $x={193} $y={391} $w={73}>0.0</ReadBox>
          <Unit $x={270} $y={396}>m/s</Unit>

          <Hourglass x={190} y={495} />
          <Sensor x={194} />
          <AutoPlaced $x={236} $y={486}>A</AutoPlaced>
          <Led $x={257} $y={486} />
          <DoubleBox $x={212} $y={509} $w={80}>
            <DoubleRow $blue><i>[mm]</i><b>2196</b></DoubleRow>
            <DoubleRow><i>[mm]</i><b>2196</b></DoubleRow>
          </DoubleBox>
          <TriDown $x={236} $y={561} />
          <PieceShape x={197} y={583} w={86} h={25} />
          <RollLabel $x={195} $y={609} $w={91} $dark>RtEs</RollLabel>
          <MoveCtl x={210} y={632} />

          <FrameBox $x={292} $y={458} $w={86} $h={227} />
          <HomeBox $x={309} $y={463}>In Home<br />Pos</HomeBox>
          <Led $x={328} $y={500} />
          <TriDown $x={331} $y={522} />
          <CoilerShape />

          <Hourglass x={393} y={495} />
          <Hourglass x={420} y={495} />
          <Sensor x={409} />
          <RollLabel $x={378} $y={609} $w={58}>RtEx</RollLabel>
          <MoveCtl x={381} y={632} />

          <GroupBox $x={435} $y={525} />
          <GroupTitle $x={439} $y={517}>Descaler Exit</GroupTitle>
          <ReadBox $x={442} $y={532} $w={73} $pr={7}>0.0</ReadBox>
          <Unit $x={525} $y={537}>m/s</Unit>
          <TriDown $x={545} $y={562} />
          <FrameBox $x={437} $y={569} $w={132} $h={76} />
          <DescalerShape />
          <MoveCtl x={436} y={650} />
          <MoveCtl x={436} y={670} />
          <MoveCtl x={502} y={650} />

          <ReadBox $x={189} $y={680} $w={102} $h={26} $pr={12}>700 °C</ReadBox>
          <ReadBox $x={189} $y={709} $w={102} $h={26} $pr={12}>700 °C</ReadBox>
          <MoveCtl x={308} y={701} />
          <TriUp $x={370} $y={689} />
          <DoubleBox $x={369} $y={697} $w={102} $pr={2}>
            <DoubleRow $blue><b>90 deg</b></DoubleRow>
            <DoubleRow><b>90 deg</b></DoubleRow>
          </DoubleBox>

          <MillDots x={604} />
          {stands.map(s => <Stand key={s.x} s={s} />)}

          <RollLabel $x={1846} $y={610} $w={64}>RRt</RollLabel>
          <ReadBox $x={1796} $y={681} $w={102} $pr={12}>700 °C</ReadBox>
          <ReadBox $x={1796} $y={710} $w={102} $pr={12}>700 °C</ReadBox>
        </Canvas>

        <Lower>
          <SlabTable>
            <colgroup>
              {[37, 149, 72, 72, 72, 72, 72, 73].map((w, k) => <col key={k} width={w} />)}
            </colgroup>
            <thead>
              <tr>
                <th />
                <th>Piece ID</th>
                <th>Head<br />Pos<br />[mm]</th>
                <th>Tail<br />Pos<br />[mm]</th>
                <th>Width<br /><br />[mm]</th>
                <th>Head<br />Thickn.<br />[mm]</th>
                <th>Speed<br /><br />[m/s]</th>
                <th>Reset</th>
              </tr>
            </thead>
            <tbody>
              {['01', '02', '03'].map(n => (
                <tr key={n}>
                  <RowNo>{n}</RowNo>
                  <EmptyId />
                  <td>0.0</td><td>0.0</td><td>0.0</td><td>0.0</td><td>0.0</td>
                  <ResetCell><ResetBtn>Reset</ResetBtn></ResetCell>
                </tr>
              ))}
            </tbody>
          </SlabTable>

          <Chart title="Speed [m/s]" ml={31} w={471} offset={49} span={412} cw={32} cols={speedCols}
            labels={['20', '15', '10', '5', '0']} major={12} minor={32} labelX={29} align="center" rowPad={20} />
          <Chart title="Current [%]" ml={19} w={285} offset={51} span={223} cw={30} cols={currentCols}
            labels={['200', '150', '100', '50', '0']} major={11} minor={31} labelX={33} align="right" rowPad={20} />
          <Chart title="Tension [N/mm2]" ml={18} w={261} offset={55} span={191} cw={32} cols={tensionCols}
            labels={['100', '75', '50', '25', '0']} major={16} minor={36} labelX={37} align="right" rowPad={20} />

          <SideTabs>
            <SideTab $on $h={62}>Process1</SideTab>
            <SideTab $h={65}>Process2</SideTab>
            <SideTab $h={65}>Thrust B.</SideTab>
            <SideTab $h={63}>Numbers</SideTab>
          </SideTabs>
        </Lower>
      </Content>
    </Main>

    <AlarmBar>
      <AlarmBolt><BoltIcon size={26} /></AlarmBolt>
      <AlarmCell $w={106}>2020-12-04</AlarmCell>
      <AlarmCell $w={116}>02:04:29</AlarmCell>
      <AlarmCell $w={59} $pl={4}>+</AlarmCell>
      <AlarmCell $w={1002}>MEC Pressure monitoring rod side - Low limit exceeded</AlarmCell>
      <AlarmCell $w={131}>DC1</AlarmCell>
      <AlarmCell $w={132}>RG_MEC</AlarmCell>
      <AlarmCell $w={130}>10007021</AlarmCell>
      <AlarmCell $w={182}>R01RG001_BDFD00</AlarmCell>
    </AlarmBar>

    <BottomNav>
      <NavBtn $w={73} $fs={18}>TF</NavBtn>
      <NavBtn $w={74} $fs={18}>RM</NavBtn>
      <NavBtn $w={73} $on>
        <svg width="22" height="24" viewBox="0 0 22 24"><path d="M2 1 V24 H4 V14 H20 V1Z" fill="#d8d8d8" /><rect x="4" y="1" width="8" height="6" fill="#bdbdbd" /><rect x="12" y="7" width="8" height="7" fill="#bdbdbd" /></svg>
      </NavBtn>
      <NavBtn $w={75} $fs={18}>DC</NavBtn>
      <NavBtn $w={78} $fs={18}>CC</NavBtn>
      {[['Sequences', 129], ['Calibration F1', 127], ['Calibration F2', 129], ['Calibration F3', 127], ['Calibration F4', 128], ['Calibration F5', 128], ['Calibration F6', 128], ['Reports', 128]].map(([n, w]) => (
        <NavBtn key={n} $w={w}>{n}</NavBtn>
      ))}
      <NavFill />
      <NavBtn $w={59}>
        <svg width="36" height="32" viewBox="0 0 36 32">
          <rect x="3" y="2" width="25" height="21" fill="#eee" />
          <path d="M5 11 H26 M15.5 3 V22 M5 4 H26 V22 H5Z" fill="none" stroke="#555" />
          <path d="M11 27 H21 V25 H11Z M13 23 H19 V26 H13Z" fill="#eee" />
          <path d="M31 13 L34 17 H29Z" fill="#eee" />
        </svg>
      </NavBtn>
      <NavBtn $w={59}>
        <svg width="36" height="34" viewBox="0 0 36 34">
          <rect x="3" y="2" width="25" height="21" fill="#eee" />
          <rect x="5" y="4" width="21" height="17" fill="#999" />
          <path d="M11 27 H21 V25 H11Z M13 23 H19 V26 H13Z" fill="#eee" />
          <circle cx="25" cy="22" r="2.5" fill="none" stroke="#eee" />
          <path d="M25 24 V34 M23 34 L25 28 L27 34" stroke="#eee" fill="none" />
          <path d="M31 12 L34 16 H29Z" fill="#eee" />
        </svg>
      </NavBtn>
      <NavBtn $w={59}><FaCamera size={24} color="#eee" /></NavBtn>
      <NavBtn $w={58}>
        <svg width="26" height="30" viewBox="0 0 26 30">
          <path d="M2 6 H18 M2 6 V27 H20 V14" fill="none" stroke="#eee" strokeWidth="3" />
          <path d="M7 12 L12 21 L22 1 L14 19" fill="#eee" stroke="#eee" strokeWidth="2" />
        </svg>
      </NavBtn>
    </BottomNav>

    <Win>
      <WinTitle>
        <svg width="14" height="14" viewBox="0 0 14 14">
          <circle cx="7" cy="7" r="6" fill="#8fc2b4" />
          <circle cx="7" cy="7" r="3" fill="#c77a6e" />
        </svg>
        <WinName>WinCC Timer</WinName>
        <WinCtl><WinMinGlyph /></WinCtl>
        <WinCtl><WinMaxGlyph /></WinCtl>
        <WinCtl $close>
          <svg width="12" height="12" viewBox="0 0 12 12"><path d="M1 1 L11 11 M11 1 L1 11" stroke="#fff" /></svg>
        </WinCtl>
      </WinTitle>
      <WinRow>
        <WinButton $w={53} $on>Time!</WinButton>
        <WinInput $w={144}>SDI_CSPM_1-1033.sql</WinInput>
        <WinButton $w={73}>Recalculate</WinButton>
        <WinInput $w={75}>pdlrt_cspm_3</WinInput>
      </WinRow>
      <Tree>
        {menus.map(m => (
          <TreeRow key={m}><TreeExp /><TreeDots /><CheckBox><Check /></CheckBox>{m}</TreeRow>
        ))}
      </Tree>
      <WinFoot>
        <WinMemo />
        <WinChecks>
          <WinCheckRow><CheckBox />Expand</WinCheckRow>
          <WinCheckRow><CheckBox><Check /></CheckBox>Select</WinCheckRow>
        </WinChecks>
      </WinFoot>
    </Win>
  </Page>
)

export default App
